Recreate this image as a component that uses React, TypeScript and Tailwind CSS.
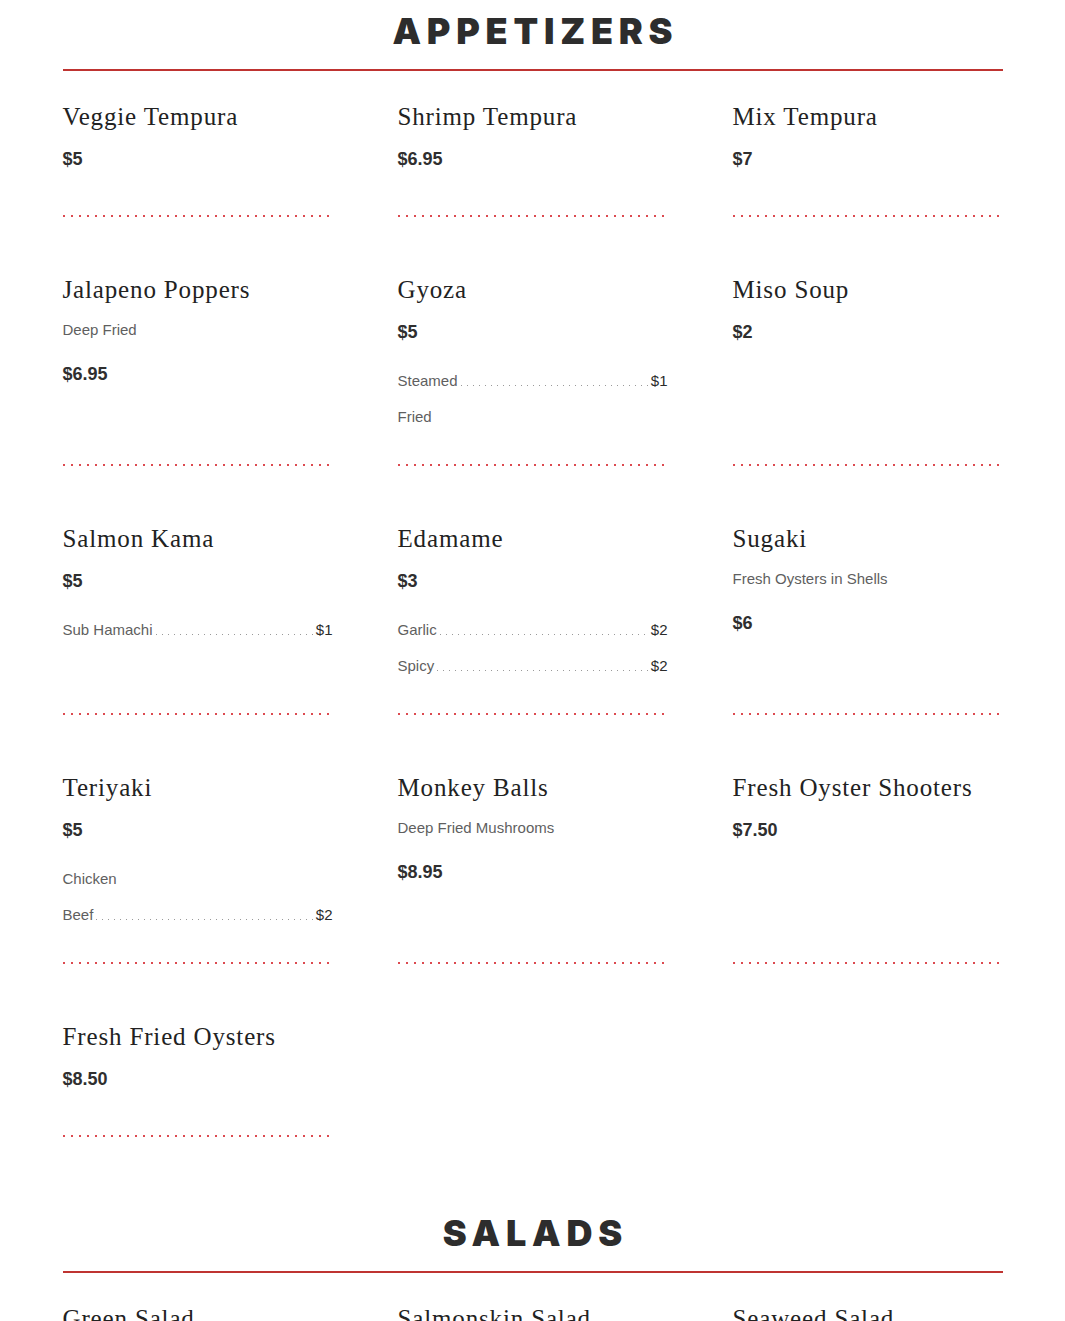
import React from 'react';

type Option = { name: string; price?: string };

type MenuItem = {
  name: string;
  description?: string;
  price?: string;
  options?: Option[];
};

type Section = { title: string; items: MenuItem[] };

const sections: Section[] = [
  {
    title: 'APPETIZERS',
    items: [
      { name: 'Veggie Tempura', price: '$5' },
      { name: 'Shrimp Tempura', price: '$6.95' },
      { name: 'Mix Tempura', price: '$7' },
      { name: 'Jalapeno Poppers', description: 'Deep Fried', price: '$6.95' },
      {
        name: 'Gyoza',
        price: '$5',
        options: [{ name: 'Steamed', price: '$1' }, { name: 'Fried' }],
      },
      { name: 'Miso Soup', price: '$2' },
      {
        name: 'Salmon Kama',
        price: '$5',
        options: [{ name: 'Sub Hamachi', price: '$1' }],
      },
      {
        name: 'Edamame',
        price: '$3',
        options: [
          { name: 'Garlic', price: '$2' },
          { name: 'Spicy', price: '$2' },
        ],
      },
      { name: 'Sugaki', description: 'Fresh Oysters in Shells', price: '$6' },
      {
        name: 'Teriyaki',
        price: '$5',
        options: [{ name: 'Chicken' }, { name: 'Beef', price: '$2' }],
      },
      { name: 'Monkey Balls', description: 'Deep Fried Mushrooms', price: '$8.95' },
      { name: 'Fresh Oyster Shooters', price: '$7.50' },
      { name: 'Fresh Fried Oysters', price: '$8.50' },
    ],
  },
  {
    title: 'SALADS',
    items: [
      { name: 'Green Salad' },
      { name: 'Salmonskin Salad' },
      { name: 'Seaweed Salad' },
    ],
  },
];

const sans = "font-['Liberation_Sans',Arial,sans-serif]";

const OptionRow = ({ option }: { option: Option }) => (
  <div className={`flex h-9 items-center text-[15px] ${sans}`}>
    <span className="text-[#5f5f5f]">{option.name}</span>
    {option.price && (
      <>
        <div className="mx-[3px] mt-[9px] h-px flex-1 bg-[linear-gradient(to_right,#9a9a9a_1px,transparent_1px)] bg-[length:6px_1px]" />
        <span className="text-[#2b2b2b]">{option.price}</span>
      </>
    )}
  </div>
);

const MenuCard = ({ item }: { item: MenuItem }) => (
  <div className="flex flex-col">
    <h3 className="mb-[15px] h-[30px] font-['Liberation_Serif','Times_New_Roman',serif] text-[25px] leading-[30px] tracking-[0.85px] text-[#222]">
      {item.name}
    </h3>
    {item.description && (
      <p className={`mb-[22px] h-5 text-[15px] leading-5 text-[#5f5f5f] ${sans}`}>{item.description}</p>
    )}
    {item.price && (
      <div className={`mb-[19px] h-6 text-[18px] font-bold leading-6 text-[#2f2f2f] ${sans}`}>{item.price}</div>
    )}
    {item.options && (
      <div className="pb-1">
        {item.options.map((o) => (
          <OptionRow key={o.name} option={o} />
        ))}
      </div>
    )}
    <div className="flex-1" />
    <div className="mt-[25px] h-[2px] bg-[linear-gradient(to_right,#dc4a50_2px,transparent_2px)] bg-[length:8px_2px]" />
  </div>
);

const MenuSection = ({ section }: { section: Section }) => (
  <section className="mb-[65px]">
    <div className="flex h-[62px] items-center justify-center">
      <h2 className="pl-[0.16em] font-['Inter',sans-serif] text-[36px] font-black leading-none tracking-[0.16em] text-[#2d2d2d]">
        {section.title}
      </h2>
    </div>
    <div className="mt-[7px] h-[2px] bg-[#bf3431]" />
    <div className="mt-[31px] grid grid-cols-3 gap-x-[65px] gap-y-[58px]">
      {section.items.map((item) => (
        <MenuCard key={item.name} item={item} />
      ))}
    </div>
  </section>
);

export default function App() {
  return (
    <div className="min-h-screen bg-white">
      <div className="mx-auto w-[940px]">
        {sections.map((s) => (
          <MenuSection key={s.title} section={s} />
        ))}
      </div>
    </div>
  );
}
